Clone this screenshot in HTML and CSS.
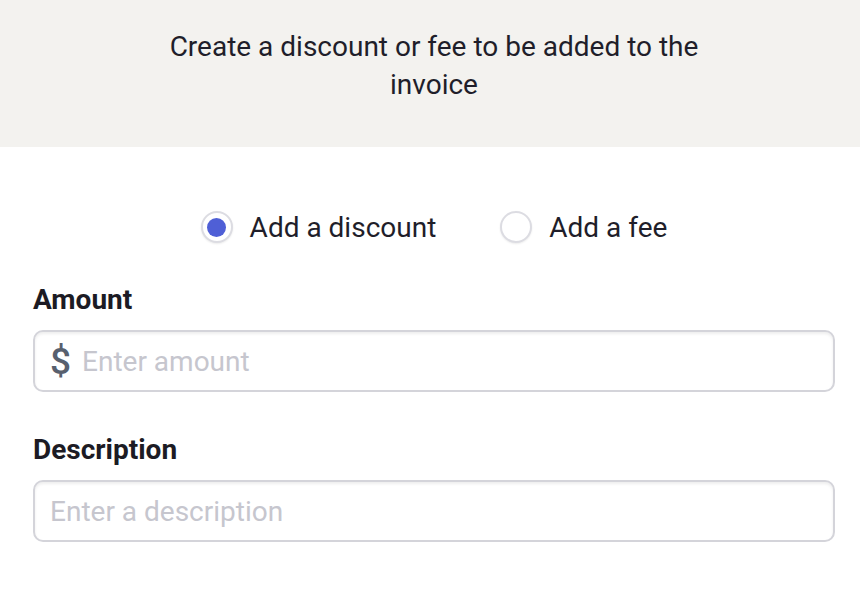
FILE: index.html
```html
<!DOCTYPE html>
<html>
<head>
<meta charset="utf-8">
<link rel="stylesheet" href="styles.css">
</head>
<body>
<div class="header">
  <p class="intro">Create a discount or fee to be added to the invoice</p>
</div>
<div class="body">
  <div class="radios">
    <label class="radio"><span class="dot checked"></span><span>Add a discount</span></label>
    <label class="radio"><span class="dot"></span><span>Add a fee</span></label>
  </div>
  <div class="field">
    <div class="label">Amount</div>
    <div class="input">
      <span class="currency">$</span><span class="ph">Enter amount</span>
    </div>
  </div>
  <div class="field">
    <div class="label">Description</div>
    <div class="input desc">
      <span class="ph">Enter a description</span>
    </div>
  </div>
</div>
</body>
</html>
```
FILE: styles.css
```css
* { box-sizing: border-box; }
html, body { margin: 0; padding: 0; background: #fff; }
body { font-family: Roboto, "Liberation Sans", sans-serif; color: #1c1b24; }
.header {
  background: #f3f2ef;
  height: 147px;
  display: flex;
  justify-content: center;
  padding-top: 28px;
  padding-left: 8px;
}
.intro {
  margin: 0;
  width: 580px;
  text-align: center;
  font-size: 28px;
  line-height: 38px;
  color: #1f1e2a;
}
.body { padding: 58px 25px 0 33px; }
.radios {
  display: flex;
  justify-content: center;
  gap: 64px;
  height: 44px;
  align-items: center;
}
.radio { display: flex; align-items: center; gap: 17px; font-size: 28px; color: #1f1e2a; }
.dot {
  width: 32px; height: 32px; border-radius: 50%;
  border: 2px solid #dcdce2;
  background: #fff;
  box-shadow: 0 1px 2px rgba(0,0,0,0.08);
  display: flex; align-items: center; justify-content: center;
}
.dot.checked::after {
  content: ""; width: 19px; height: 19px; border-radius: 50%;
  background: #4f5fd6;
}
.field { margin-top: 35px; }
.field + .field { margin-top: 42px; }
.label { font-weight: 700; font-size: 28px; line-height: 32px; color: #1c1b24; }
.input {
  margin-top: 14px;
  height: 62px;
  border: 2px solid #d4d4da;
  border-radius: 10px;
  box-shadow: inset 0 2px 3px rgba(0,0,0,0.07);
  display: flex; align-items: center;
  padding-left: 15px;
  font-size: 28px;
}
.currency { color: #58606e; font-size: 37px; font-weight: 500; margin-right: 11px; line-height: 1; }
.ph { color: #c6c6ce; }
```
